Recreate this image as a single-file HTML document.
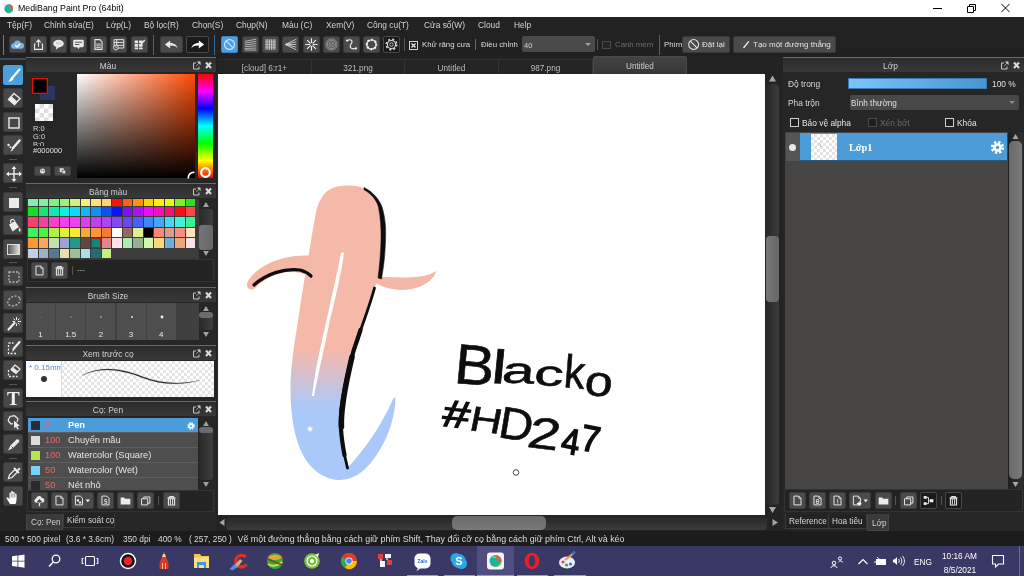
<!DOCTYPE html>
<html lang="vi"><head><meta charset="utf-8"><title>MediBang Paint Pro (64bit)</title>
<style>
*{box-sizing:border-box;margin:0;padding:0}
html,body{width:1024px;height:576px;overflow:hidden;background:#262626}
body{position:relative;font-family:"Liberation Sans","DejaVu Sans",sans-serif;font-size:8.4px;color:#d2d2d2;-webkit-font-smoothing:antialiased}
#root{position:absolute;left:0;top:0;width:1024px;height:576px;will-change:transform;filter:blur(.35px)}
.a{position:absolute}
.t{position:absolute;white-space:nowrap;line-height:1}
#title{left:0;top:0;width:1024px;height:17px;background:#fff;color:#000}
#menu{left:0;top:17px;width:1024px;height:16px;background:#222}
#menu .t{top:4px;font-size:8.4px;color:#d4d4d4}
#tool{left:0;top:33px;width:1024px;height:24px;background:linear-gradient(180deg,#222,#202020)}
.btn{position:absolute;background:#4a4a4a;border-radius:2px;border:1px solid #3a3a3a}
.btn.dk{background:#1a1a1a;border-color:#484848}
.btn.on{background:#4d9fdb;border-color:#3f88c0}
.btn svg{position:absolute;left:0;top:0;width:100%;height:100%}
.hdr{position:absolute;height:15px;background:linear-gradient(180deg,#2c2c2c,#393939);border-top:1px solid #3f73a0;color:#d0d0d0;font-size:8.4px}
.hdr .ttl{position:absolute;left:0;right:26px;top:4px;text-align:center;line-height:1;white-space:nowrap}
.hdr svg{position:absolute;right:3px;top:3px}
.pbody{position:absolute;background:#262626}
.tb{position:absolute;left:3px;width:20px;height:20px;background:#484848;border:1px solid #3a3a3a;border-radius:2px}
.tb.on{background:#4d9fdb;border-color:#4d9fdb}
.tb svg{position:absolute;left:0;top:0}
.sep{position:absolute;left:9px;width:8px;height:1px;background:#555}
.sw{position:absolute;width:9.5px;height:9.5px}
.row{position:absolute;left:28px;width:170px;height:15px;background:#4e4e4e;border-bottom:1px solid #5e5e5e;font-size:9.3px;color:#e4e4e4}
.row .c{position:absolute;left:3px;top:3px;width:9px;height:9px}
.row .n{position:absolute;left:17px;top:3px;color:#e26a6a;line-height:1}
.row .m{position:absolute;left:40px;top:3px;line-height:1;white-space:nowrap}
.sbv{position:absolute;background:linear-gradient(90deg,#1f1f1f,#303030)}
.thumb{position:absolute;background:linear-gradient(90deg,#6a6a6a,#7a7a7a);border-radius:4px}
.chk{background-color:#fff;background-image:linear-gradient(45deg,#ddd 25%,transparent 25%,transparent 75%,#ddd 75%),linear-gradient(45deg,#ddd 25%,transparent 25%,transparent 75%,#ddd 75%);background-size:8px 8px;background-position:0 0,4px 4px}
</style></head>
<body>
<div id="root">
<div id="title" class="a">
<svg class="a" style="left:3.500px;top:4px" width="9.500" height="9.500" viewBox="0 0 12 12"><circle cx="6" cy="6" r="5.600" fill="#22b0a0"/><path d="M6 .4a5.600 5.600 0 0 1 5.600 5.600c-2.500 1-5-1-5.600-5.600z" fill="#f05a38"/><path d="M11.600 6a5.600 5.600 0 0 1-7.500 5.200c4-1 5.500-2.700 7.500-5.200z" fill="#58c050"/></svg>
<span class="t" style="left:18px;top:4px;font-size:8.8px">MediBang Paint Pro (64bit)</span>
<svg class="a" style="left:925px;top:0" width="99" height="17" viewBox="0 0 99 17" fill="none" stroke="#000" stroke-width="1"><path d="M8 8.5h9"/><path d="M42.5 6.5h6v6h-6zM44.500 6.500v-2h6v6h-2"/><path d="M76.500 4l8 8M84.500 4l-8 8"/></svg>
</div>
<div id="menu" class="a"><span class="t" style="left:7px">Tệp(F)</span><span class="t" style="left:44px">Chỉnh sửa(E)</span><span class="t" style="left:106px">Lớp(L)</span><span class="t" style="left:144px">Bộ lọc(R)</span><span class="t" style="left:192px">Chọn(S)</span><span class="t" style="left:236px">Chụp(N)</span><span class="t" style="left:282px">Màu (C)</span><span class="t" style="left:326px">Xem(V)</span><span class="t" style="left:367px">Công cụ(T)</span><span class="t" style="left:424px">Cửa sổ(W)</span><span class="t" style="left:478px">Cloud</span><span class="t" style="left:514px">Help</span></div>
<div id="tool" class="a"><div class="a" style="left:3px;top:2px;width:1px;height:20px;background:#4a88b8"></div><div class="btn " style="left:9px;top:3px;width:17px;height:17px"><svg viewBox="0 0 17 17"><path d="M4.200 13.200a3 3 0 0 1 .2-6a4.100 4.100 0 0 1 7.800-.8a3.400 3.400 0 0 1 .5 6.800z" fill="#7db4ea"/><path d="M6 9.400l2 2 3.600-3.800" fill="none" stroke="#fff" stroke-width="1.500"/></svg></div><div class="btn " style="left:29.5px;top:3px;width:17px;height:17px"><svg viewBox="0 0 17 17"><path d="M5 8H4v6h9V8h-1M8.500 11V3.500M6 6l2.500-2.700L11 6" fill="none" stroke="#e8e8e8" stroke-width="1.300"/></svg></div><div class="btn " style="left:49.5px;top:3px;width:17px;height:17px"><svg viewBox="0 0 17 17"><ellipse cx="8.500" cy="7.500" rx="6" ry="4.300" fill="#e8e8e8"/><path d="M6 11l-.5 3.500 3.500-3z" fill="#e8e8e8"/><path d="M6 7h1M8 7h1M10 7h1" stroke="#888" stroke-width="1"/></svg></div><div class="btn " style="left:70px;top:3px;width:17px;height:17px"><svg viewBox="0 0 17 17"><rect x="2.500" y="3" width="12" height="8.500" rx="1.500" fill="#e8e8e8"/><path d="M7 11l1.500 3 1.500-3z" fill="#e8e8e8"/><path d="M4.500 6h8M4.500 8.500h5" stroke="#555" stroke-width="1.200"/></svg></div><div class="btn " style="left:90px;top:3px;width:17px;height:17px"><svg viewBox="0 0 17 17"><path d="M4.500 3h5.500l2.500 2.500V14h-8z" fill="none" stroke="#e8e8e8" stroke-width="1.200"/><path d="M6 8h5M6 10h5M6 12h5" stroke="#e8e8e8" stroke-width="1"/></svg></div><div class="btn " style="left:110px;top:3px;width:17px;height:17px"><svg viewBox="0 0 17 17"><path d="M3.500 3h11v9.500h-11zM3.500 6.200h11M3.500 9.400h11M6.500 3v9.500" fill="none" stroke="#e8e8e8" stroke-width="1.100"/><circle cx="5.500" cy="12" r="2.600" fill="#4a4a4a" stroke="#e8e8e8" stroke-width="1"/><path d="M5.500 10.500v1.600h1.300" stroke="#e8e8e8" fill="none" stroke-width=".8"/></svg></div><div class="btn " style="left:130.5px;top:3px;width:17px;height:17px"><svg viewBox="0 0 17 17"><path d="M3 4h4v3H3zM8 4h4v3H8zM3 8h4v3H3zM8 8h4v3H8zM3 12h4v2H3zM8 12h4v2H8z" fill="#e8e8e8"/><path d="M10 8.500l4.500-5" stroke="#e8e8e8" stroke-width="1.600"/></svg></div><div class="a" style="left:153px;top:2px;width:1px;height:20px;background:#3b6a90"></div><div class="btn " style="left:160px;top:3px;width:23px;height:17px"><svg viewBox="0 0 23 17"><path d="M4 8.500l6-4.500v2.800c4 0 7 1.500 8.500 6-2-2.600-4.500-3.300-8.500-3.200V13z" fill="#e8e8e8"/></svg></div><div class="btn dk" style="left:186px;top:3px;width:23px;height:17px"><svg viewBox="0 0 23 17"><path d="M19 8.500l-6-4.500v2.800c-4 0-7 1.500-8.500 6 2-2.600 4.500-3.300 8.500-3.200V13z" fill="#fff"/></svg></div><div class="a" style="left:214px;top:2px;width:1px;height:20px;background:#3b6a90"></div><div class="btn on" style="left:221px;top:3px;width:17px;height:17px"><svg viewBox="0 0 17 17"><circle cx="8.500" cy="8.500" r="5.600" fill="none" stroke="#cfe6fa" stroke-width="1.300"/><path d="M4.800 4.500l7.600 7.800" stroke="#cfe6fa" stroke-width="1.300"/></svg></div><div class="btn " style="left:241.5px;top:3px;width:17px;height:17px"><svg viewBox="0 0 17 17"><path d="M2 5l13-2.500M2 7l13-2M2 9l13-1.500M2 11l13-1M2 13l13-.5M2 14.800h13" stroke="#cfcfcf" stroke-width=".9" fill="none"/></svg></div><div class="btn " style="left:262px;top:3px;width:17px;height:17px"><svg viewBox="0 0 17 17"><path d="M3.500 2.500v12M5.500 2.500v12M7.500 2.500v12M9.500 2.500v12M11.500 2.500v12M13.500 2.500v12" stroke="#cfcfcf" stroke-width="1.100" fill="none"/><path d="M2.500 5.500h12M2.500 8.500h12M2.500 11.500h12" stroke="#cfcfcf" stroke-width=".6" fill="none"/></svg></div><div class="btn " style="left:282px;top:3px;width:17px;height:17px"><svg viewBox="0 0 17 17"><path d="M2.500 8.500L15 2.500M2.500 8.500L15 5.500M2.500 8.500H15M2.500 8.500L15 11.500M2.500 8.500L15 14.500" stroke="#cfcfcf" stroke-width="1" fill="none"/></svg></div><div class="btn " style="left:302.5px;top:3px;width:17px;height:17px"><svg viewBox="0 0 17 17"><path d="M8.500 1.500v14M1.500 8.500h14M3.500 3.500l10 10M13.500 3.500l-10 10" stroke="#f0f0f0" stroke-width="1.300" fill="none"/><circle cx="8.500" cy="8.500" r="1.600" fill="#4a4a4a"/></svg></div><div class="btn " style="left:322.5px;top:3px;width:17px;height:17px"><svg viewBox="0 0 17 17"><g fill="none" stroke="#b4b4b4" stroke-width=".8"><circle cx="8.500" cy="8.500" r="6.300"/><circle cx="8.500" cy="8.500" r="4.600"/><circle cx="8.500" cy="8.500" r="3"/><circle cx="8.500" cy="8.500" r="1.300"/></g></svg></div><div class="btn " style="left:343px;top:3px;width:17px;height:17px"><svg viewBox="0 0 17 17"><path d="M3.500 4c5-2.500 7 .5 4.500 4s0 6.500 5.500 5" fill="none" stroke="#eee" stroke-width="1.200"/><circle cx="3.500" cy="4" r="1.300" fill="#eee"/><circle cx="13.500" cy="13" r="1.300" fill="#eee"/></svg></div><div class="btn " style="left:363px;top:3px;width:17px;height:17px"><svg viewBox="0 0 17 17"><circle cx="8.500" cy="8.500" r="5.300" fill="none" stroke="#f4f4f4" stroke-width="1.500"/><circle cx="8.500" cy="8.500" r="5.300" fill="none" stroke="#f4f4f4" stroke-width="2.600" stroke-dasharray="1.600 2.560" stroke-dashoffset=".8"/></svg></div><div class="btn dk" style="left:383px;top:3px;width:17px;height:17px"><svg viewBox="0 0 17 17"><circle cx="8.500" cy="8.500" r="4.600" fill="none" stroke="#e0e0e0" stroke-width="1.200"/><circle cx="8.500" cy="8.500" r="6" fill="none" stroke="#e0e0e0" stroke-width="1.600" stroke-dasharray="2.360 2.360"/><circle cx="8.500" cy="8.500" r="2" fill="none" stroke="#e0e0e0" stroke-width=".9"/></svg></div><div class="a" style="left:404px;top:5px;width:1px;height:13px;background:#555"></div><svg class="a" style="left:409px;top:7.500px" width="9" height="9" viewBox="0 0 9 9"><rect x=".5" y=".5" width="8" height="8" fill="#1c1c1c" stroke="#d4d4d4"/><path d="M2.500 2.500l4 4M6.500 2.500l-4 4" stroke="#eee" stroke-width="1.300"/></svg><span class="t" style="left:422px;top:8px;font-size:7.8px;color:#ddd">Khử răng cưa</span><div class="a" style="left:475px;top:6px;width:1px;height:11px;background:#666"></div><span class="t" style="left:481px;top:8px;font-size:7.8px;color:#ddd">Điều chỉnh</span><div class="a" style="left:522px;top:3px;width:73px;height:16px;background:#4a4a4a;border-radius:2px"><span class="t" style="left:2px;top:5.500px;font-size:7.5px;color:#d4d4d4">40</span><svg class="a" style="right:4px;top:6.500px" width="6" height="3"><path d="M0 0h6L3 3z" fill="#a0a0a0"/></svg></div><div class="a" style="left:597px;top:6px;width:1px;height:11px;background:#555"></div><div class="a" style="left:602px;top:7.500px;width:8.500px;height:8.500px;border:1px solid #4a4a4a;background:#262626"></div><span class="t" style="left:615px;top:8px;font-size:7.8px;color:#6e6e6e">Canh mềm</span><div class="a" style="left:659px;top:2px;width:1px;height:20px;background:#3b6a90"></div><span class="t" style="left:664px;top:8px;font-size:7.8px;color:#ddd">Phím</span><div class="btn" style="left:682px;top:3px;width:48px;height:17px"><svg viewBox="0 0 48 17"><circle cx="10" cy="8.500" r="5.600" fill="none" stroke="#e8e8e8" stroke-width="1.200"/><path d="M6 4.500l8 8" stroke="#e8e8e8" stroke-width="1.200"/></svg><span class="t" style="left:19px;top:4px;font-size:8px;color:#e4e4e4">Đặt lại</span></div><div class="btn" style="left:733px;top:3px;width:103px;height:17px"><svg viewBox="0 0 103 17"><path d="M5 12.500l6-7.500" stroke="#f0f0f0" stroke-width="1.500"/></svg><span class="t" style="left:19px;top:4px;font-size:8px;color:#e4e4e4">Tạo một đường thẳng</span></div></div>
<div class="a" style="left:0;top:57px;width:26px;height:474px;background:#252525"></div><div class="a" style="left:0;top:58px;width:26px;height:2px;background:#3a4a58"></div><div class="tb on" style="top:65px"><svg width="20" height="20" viewBox="0 0 20 20"><path d="M15.500 3.500L9 11" stroke="#fff" stroke-width="2.200" stroke-linecap="round"/><path d="M4 15.500c2.500.3 4.800-.8 5.800-3.300l-2-1.600c-1.600 1-1.500 3.600-3.800 4.900z" fill="#fff"/></svg></div><div class="tb " style="top:88px"><svg width="20" height="20" viewBox="0 0 20 20"><path d="M10 4.500l6 5-5.500 6-6-5z" fill="none" stroke="#ececec" stroke-width="1.400"/><path d="M7 13l-2.500-2.500 3-3.200 5.500 5-2.500 3.200z" fill="#ececec"/></svg></div><div class="tb " style="top:112px"><svg width="20" height="20" viewBox="0 0 20 20"><rect x="5" y="5" width="10" height="10" fill="none" stroke="#ececec" stroke-width="1.400"/></svg></div><div class="tb " style="top:135px"><svg width="20" height="20" viewBox="0 0 20 20"><path d="M15.500 4.500L9 12" stroke="#ececec" stroke-width="2.400" stroke-linecap="round"/><path d="M8 12.500l-1.500 3 3-1.500z" fill="#ececec"/><circle cx="4.500" cy="9" r="1.200" fill="#ececec"/><circle cx="6.500" cy="11.300" r="1" fill="#ececec"/></svg></div><div class="sep" style="top:159px"></div><div class="tb " style="top:163px"><svg width="20" height="20" viewBox="0 0 20 20"><path d="M10 3v14M3 10h14" stroke="#ececec" stroke-width="1.400"/><path d="M10 2l2.500 3h-5zM10 18l2.500-3h-5zM2 10l3-2.500v5zM18 10l-3-2.500v5z" fill="#ececec"/></svg></div><div class="sep" style="top:187px"></div><div class="tb " style="top:192px"><svg width="20" height="20" viewBox="0 0 20 20"><rect x="5" y="5" width="10" height="10" fill="#ececec"/></svg></div><div class="tb " style="top:215px"><svg width="20" height="20" viewBox="0 0 20 20"><path d="M5 8.500l6-3.500 4 6-6.500 4.500z" fill="#ececec"/><path d="M7 7c-1.500-3.500 2.500-5 3.500-2" fill="none" stroke="#ececec" stroke-width="1.200"/><path d="M15.500 11.500c1 1.500 1.300 2.500 1 3.500-.8 1-2 .4-1.800-1z" fill="#ececec"/></svg></div><div class="tb" style="top:239px"><div class="a" style="left:3px;top:4px;width:13px;height:11px;border:1px solid #ddd;background:linear-gradient(90deg,#555,#ddd)"></div></div><div class="sep" style="top:262px"></div><div class="tb " style="top:266px"><svg width="20" height="20" viewBox="0 0 20 20"><rect x="5" y="5" width="10" height="10" fill="none" stroke="#b8b8b8" stroke-width="1.300" stroke-dasharray="2 1.500"/></svg></div><div class="tb " style="top:290px"><svg width="20" height="20" viewBox="0 0 20 20"><ellipse cx="10" cy="10" rx="6.500" ry="4.500" transform="rotate(-25 10 10)" fill="none" stroke="#b8b8b8" stroke-width="1.300" stroke-dasharray="2 1.500"/></svg></div><div class="tb " style="top:313px"><svg width="20" height="20" viewBox="0 0 20 20"><path d="M4.500 15.500l6-6.500" stroke="#ececec" stroke-width="2.200" stroke-linecap="round"/><path d="M12.500 3v3M12.500 9.500v2.500M8.500 7.500h2.500M14 7.500h3M9.500 4.500l1.800 1.800M15.500 4.500l-1.800 1.800M15.500 10.500l-1.800-1.800" stroke="#ececec" stroke-width="1"/></svg></div><div class="tb " style="top:337px"><svg width="20" height="20" viewBox="0 0 20 20"><path d="M4.500 7v8.500h9" fill="none" stroke="#ececec" stroke-width="1.300" stroke-dasharray="2 1.500"/><path d="M4.500 5h5" stroke="#ececec" stroke-width="1.300" stroke-dasharray="2 1.500"/><path d="M15.500 4l-6 7" stroke="#ececec" stroke-width="2.200" stroke-linecap="round"/><path d="M8.800 11.500l-1 2.200 2.200-1z" fill="#ececec"/></svg></div><div class="tb " style="top:360px"><svg width="20" height="20" viewBox="0 0 20 20"><path d="M4.500 9v6.500h9" fill="none" stroke="#ececec" stroke-width="1.300" stroke-dasharray="2 1.500"/><path d="M11 4l5 4-4 4.500-5-4z" fill="none" stroke="#ececec" stroke-width="1.200"/><path d="M9 11l-2-2 2.300-2.500 4.500 3.800-1.800 2.200z" fill="#ececec"/></svg></div><div class="sep" style="top:384px"></div><div class="tb" style="top:388px"><span class="t" style="left:3px;top:0px;font-family:'Liberation Serif',serif;font-weight:bold;font-size:19px;color:#f0f0f0">T</span></div><div class="tb " style="top:411px"><svg width="20" height="20" viewBox="0 0 20 20"><path d="M4 8.500l2-4 4.500-.8 3.500 3-1 3.500" fill="none" stroke="#ececec" stroke-width="1.200"/><path d="M4 8.500l3 3.500 2-.3" fill="none" stroke="#ececec" stroke-width="1.200"/><path d="M10 8.500v8l2-1.800 1.500 3 1.300-.6-1.400-3h2.600z" fill="#ececec"/></svg></div><div class="tb " style="top:434px"><svg width="20" height="20" viewBox="0 0 20 20"><path d="M4 15.500l2.500-5 6-6c1.500-1.200 3.700.8 2.500 2.500l-6 6z" fill="#ececec"/><path d="M7.500 11.500l2.200 2.200" stroke="#484848" stroke-width="1"/></svg></div><div class="sep" style="top:458px"></div><div class="tb " style="top:462px"><svg width="20" height="20" viewBox="0 0 20 20"><path d="M4.500 15.500l1-3.500 5.500-5.500 2.500 2.500-5.500 5.500z" fill="none" stroke="#ececec" stroke-width="1.300"/><path d="M10 5l5 5" stroke="#ececec" stroke-width="1.800"/><path d="M12.500 7.500l2-2.500c1-1 2.500.5 1.500 1.500l-2.500 2z" fill="#ececec"/></svg></div><div class="tb " style="top:486px"><svg width="20" height="20" viewBox="0 0 20 20"><path d="M6 17c-1-2-2.500-3.500-3.500-6 .8-1 2-.3 3 1.200V6.500c0-1.200 1.600-1.200 1.700 0V5c0-1.300 1.700-1.300 1.800 0v1c0-1.300 1.700-1.300 1.800 0v1.300c0-1.200 1.600-1.200 1.700 0 .2 4 .3 6.500-1 9.700z" fill="#fff"/><path d="M7.200 6.500v4M9 6v4.500M10.800 6.500v4" stroke="#484848" stroke-width=".6"/></svg></div><div class="hdr" style="left:26px;top:57px;width:190px"><span class="ttl">Màu</span><svg width="20" height="9" viewBox="0 0 20 9"><path d="M3 2H.5v6h5.500v-2.500" fill="none" stroke="#c4c4c4" stroke-width="1"/><path d="M4.500 .8h2.700v2.700zM3.300 4.800l3-3" fill="#c4c4c4" stroke="#c4c4c4" stroke-width=".7"/><path d="M13 1.500l5 5.500M18 1.500l-5 5.500" stroke="#dcdcdc" stroke-width="2"/></svg></div><div class="pbody" style="left:26px;top:73px;width:190px;height:110px"></div><div class="a" style="left:40px;top:86px;width:15px;height:14px;background:#2a3563"></div><div class="a" style="left:32px;top:78px;width:16px;height:16px;background:#000;border:1px solid #e01010;box-shadow:inset 0 0 0 .5px #a00"></div><div class="a chk" style="left:34.500px;top:104px;width:18px;height:17px;background-size:9px 9px;background-position:0 0,4.500px 4.500px"></div><span class="t" style="left:33px;top:125px;font-size:7.5px;color:#d8d8d8">R:0</span><span class="t" style="left:33px;top:133px;font-size:7.5px;color:#d8d8d8">G:0</span><span class="t" style="left:33px;top:140.5px;font-size:7.5px;color:#d8d8d8">B:0</span><div class="a" style="left:31px;top:146px;width:32px;height:9px;background:#262626"></div><span class="t" style="left:33px;top:147px;font-size:7.5px;color:#e2e2e2">#000000</span><div class="btn" style="left:34px;top:166px;width:17px;height:10px"><svg viewBox="0 0 17 10"><circle cx="8.500" cy="5" r="3.200" fill="#ddd"/><circle cx="7.500" cy="4" r=".8" fill="#555"/><circle cx="9.800" cy="4.500" r=".8" fill="#555"/></svg></div><div class="btn" style="left:54px;top:166px;width:17px;height:10px"><svg viewBox="0 0 17 10"><rect x="5" y="1.500" width="5" height="5" fill="#ddd"/><rect x="8" y="4" width="4.500" height="4.500" fill="#ddd" stroke="#555" stroke-width=".8"/></svg></div><div class="a" style="left:77px;top:74px;width:118px;height:104px;background:linear-gradient(0deg,#000,rgba(0,0,0,0)),linear-gradient(90deg,#fff,#ff4a05)"></div><svg class="a" style="left:187px;top:170px" width="9" height="9" viewBox="0 0 9 9"><path d="M1.500 8.500a5 5 0 0 1 6-6" fill="none" stroke="#fff" stroke-width="1.600"/></svg><div class="a" style="left:198px;top:74px;width:15px;height:104px;background:linear-gradient(180deg,#ff0000 0%,#ff00ff 16.600%,#0000ff 33.300%,#00ffff 50%,#00ff00 66.600%,#ffff00 83.300%,#ff0000 100%)"></div><svg class="a" style="left:199px;top:166px" width="13" height="13" viewBox="0 0 13 13"><circle cx="6.500" cy="6.500" r="4.300" fill="none" stroke="#fff" stroke-width="2.200"/></svg><div class="hdr" style="left:26px;top:183px;width:190px"><span class="ttl">Bảng màu</span><svg width="20" height="9" viewBox="0 0 20 9"><path d="M3 2H.5v6h5.500v-2.500" fill="none" stroke="#c4c4c4" stroke-width="1"/><path d="M4.500 .8h2.700v2.700zM3.300 4.800l3-3" fill="#c4c4c4" stroke="#c4c4c4" stroke-width=".7"/><path d="M13 1.500l5 5.500M18 1.500l-5 5.500" stroke="#dcdcdc" stroke-width="2"/></svg></div><div class="pbody" style="left:26px;top:199px;width:190px;height:88px"></div><div class="a" style="left:27px;top:199px;width:172px;height:60px;background:#3c3c3c;overflow:hidden"><i class="sw" style="left:1.0px;top:-3.0px;background:#80f0b0"></i><i class="sw" style="left:11.5px;top:-3.0px;background:#80f0a0"></i><i class="sw" style="left:22.0px;top:-3.0px;background:#80f080"></i><i class="sw" style="left:32.5px;top:-3.0px;background:#a0f080"></i><i class="sw" style="left:43.0px;top:-3.0px;background:#d0f080"></i><i class="sw" style="left:53.5px;top:-3.0px;background:#f0f080"></i><i class="sw" style="left:64.0px;top:-3.0px;background:#ffe080"></i><i class="sw" style="left:74.5px;top:-3.0px;background:#ffd080"></i><i class="sw" style="left:85.0px;top:-3.0px;background:#ff1010"></i><i class="sw" style="left:95.5px;top:-3.0px;background:#ff6010"></i><i class="sw" style="left:106.0px;top:-3.0px;background:#ff9010"></i><i class="sw" style="left:116.5px;top:-3.0px;background:#ffd010"></i><i class="sw" style="left:127.0px;top:-3.0px;background:#fff010"></i><i class="sw" style="left:137.5px;top:-3.0px;background:#e0ff10"></i><i class="sw" style="left:148.0px;top:-3.0px;background:#80f020"></i><i class="sw" style="left:158.5px;top:-3.0px;background:#30e020"></i><i class="sw" style="left:1.0px;top:7.5px;background:#10e020"></i><i class="sw" style="left:11.5px;top:7.5px;background:#10e870"></i><i class="sw" style="left:22.0px;top:7.5px;background:#10e8b8"></i><i class="sw" style="left:32.5px;top:7.5px;background:#10f0e0"></i><i class="sw" style="left:43.0px;top:7.5px;background:#10d8f8"></i><i class="sw" style="left:53.5px;top:7.5px;background:#10b8f8"></i><i class="sw" style="left:64.0px;top:7.5px;background:#1090f0"></i><i class="sw" style="left:74.5px;top:7.5px;background:#1050f0"></i><i class="sw" style="left:85.0px;top:7.5px;background:#1010f8"></i><i class="sw" style="left:95.5px;top:7.5px;background:#8010f0"></i><i class="sw" style="left:106.0px;top:7.5px;background:#b010f0"></i><i class="sw" style="left:116.5px;top:7.5px;background:#e810f0"></i><i class="sw" style="left:127.0px;top:7.5px;background:#f010c0"></i><i class="sw" style="left:137.5px;top:7.5px;background:#f81070"></i><i class="sw" style="left:148.0px;top:7.5px;background:#f81010"></i><i class="sw" style="left:158.5px;top:7.5px;background:#f84848"></i><i class="sw" style="left:1.0px;top:18.0px;background:#f84070"></i><i class="sw" style="left:11.5px;top:18.0px;background:#f840a0"></i><i class="sw" style="left:22.0px;top:18.0px;background:#f840c8"></i><i class="sw" style="left:32.5px;top:18.0px;background:#f040f0"></i><i class="sw" style="left:43.0px;top:18.0px;background:#f040f0"></i><i class="sw" style="left:53.5px;top:18.0px;background:#d840f0"></i><i class="sw" style="left:64.0px;top:18.0px;background:#c040f0"></i><i class="sw" style="left:74.5px;top:18.0px;background:#a848f0"></i><i class="sw" style="left:85.0px;top:18.0px;background:#8848f0"></i><i class="sw" style="left:95.5px;top:18.0px;background:#6848f0"></i><i class="sw" style="left:106.0px;top:18.0px;background:#4860f8"></i><i class="sw" style="left:116.5px;top:18.0px;background:#4088f8"></i><i class="sw" style="left:127.0px;top:18.0px;background:#40a8f8"></i><i class="sw" style="left:137.5px;top:18.0px;background:#40d8f8"></i><i class="sw" style="left:148.0px;top:18.0px;background:#40f0d8"></i><i class="sw" style="left:158.5px;top:18.0px;background:#40f090"></i><i class="sw" style="left:1.0px;top:28.5px;background:#40f060"></i><i class="sw" style="left:11.5px;top:28.5px;background:#50f040"></i><i class="sw" style="left:22.0px;top:28.5px;background:#b0f040"></i><i class="sw" style="left:32.5px;top:28.5px;background:#e0f040"></i><i class="sw" style="left:43.0px;top:28.5px;background:#f8e838"></i><i class="sw" style="left:53.5px;top:28.5px;background:#f8a838"></i><i class="sw" style="left:64.0px;top:28.5px;background:#f89838"></i><i class="sw" style="left:74.5px;top:28.5px;background:#f87838"></i><i class="sw" style="left:85.0px;top:28.5px;background:#ffffff"></i><i class="sw" style="left:95.5px;top:28.5px;background:#986860"></i><i class="sw" style="left:106.0px;top:28.5px;background:#e0f090"></i><i class="sw" style="left:116.5px;top:28.5px;background:#000000"></i><i class="sw" style="left:127.0px;top:28.5px;background:#f88878"></i><i class="sw" style="left:137.5px;top:28.5px;background:#e09888"></i><i class="sw" style="left:148.0px;top:28.5px;background:#f88c80"></i><i class="sw" style="left:158.5px;top:28.5px;background:#ffe0c0"></i><i class="sw" style="left:1.0px;top:39.0px;background:#f89838"></i><i class="sw" style="left:11.5px;top:39.0px;background:#f8a858"></i><i class="sw" style="left:22.0px;top:39.0px;background:#c0e0b0"></i><i class="sw" style="left:32.5px;top:39.0px;background:#a0a0d8"></i><i class="sw" style="left:43.0px;top:39.0px;background:#209888"></i><i class="sw" style="left:53.5px;top:39.0px;background:#604840"></i><i class="sw" style="left:64.0px;top:39.0px;background:#108878;box-shadow:inset 0 0 0 1px #a02020"></i><i class="sw" style="left:74.5px;top:39.0px;background:#e08888"></i><i class="sw" style="left:85.0px;top:39.0px;background:#ffe0e8"></i><i class="sw" style="left:95.5px;top:39.0px;background:#a8f0b0"></i><i class="sw" style="left:106.0px;top:39.0px;background:#98b090"></i><i class="sw" style="left:116.5px;top:39.0px;background:#d0f8b0"></i><i class="sw" style="left:127.0px;top:39.0px;background:#f8d878"></i><i class="sw" style="left:137.5px;top:39.0px;background:#70b0d8"></i><i class="sw" style="left:148.0px;top:39.0px;background:#e8a878"></i><i class="sw" style="left:158.5px;top:39.0px;background:#ffe0e8"></i><i class="sw" style="left:1.0px;top:49.5px;background:#c0d0e8"></i><i class="sw" style="left:11.5px;top:49.5px;background:#a0b0c8"></i><i class="sw" style="left:22.0px;top:49.5px;background:#587898"></i><i class="sw" style="left:32.5px;top:49.5px;background:#e8e0a8"></i><i class="sw" style="left:43.0px;top:49.5px;background:#a0c098"></i><i class="sw" style="left:53.5px;top:49.5px;background:#a8e0e0"></i><i class="sw" style="left:64.0px;top:49.5px;background:#286878"></i><i class="sw" style="left:74.5px;top:49.5px;background:#c8f080"></i></div><div class="a" style="left:199px;top:199px;width:15px;height:60px;background:#262626"></div><div class="a" style="left:199px;top:209px;width:14px;height:40px;border-radius:3px;background:linear-gradient(90deg,#2a2a2a,#3e3e3e)"></div><svg class="a" style="left:199px;top:199px" width="15" height="60"><path d="M4.0 8h6l-3-5z" fill="#a0a0a0"/><path d="M4.0 52h6l-3 5z" fill="#a0a0a0"/></svg><div class="a" style="left:199px;top:225px;width:14px;height:25px;border-radius:3px;background:linear-gradient(90deg,#747474,#686868)"></div><div class="a" style="left:27px;top:259px;width:187px;height:23px;border:1px solid #333;background:#232323"></div><div class="btn" style="left:31px;top:262px;width:17px;height:17px"><svg viewBox="0 0 17 17"><path d="M4.500 3.500h5.500l2.500 2.500v7.500h-8z" fill="none" stroke="#e8e8e8" stroke-width="1.100"/><path d="M10 3.500v2.500h2.500" fill="none" stroke="#e8e8e8" stroke-width=".9"/></svg></div><div class="btn" style="left:51px;top:262px;width:17px;height:17px"><svg viewBox="0 0 17 17"><path d="M4 5.500h9M6.500 5.500v-1.500h4v1.500" fill="none" stroke="#e8e8e8" stroke-width="1.200"/><path d="M5 6.500h7v7H5z" fill="none" stroke="#e8e8e8" stroke-width="1.200"/><path d="M7.200 7v6M9.800 7v6" stroke="#e8e8e8" stroke-width="1.100"/></svg></div><div class="a" style="left:72px;top:266px;width:1px;height:9px;background:#555"></div><span class="t" style="left:77px;top:266px;font-size:8px;color:#bbb">---</span><div class="hdr" style="left:26px;top:287px;width:190px"><span class="ttl">Brush Size</span><svg width="20" height="9" viewBox="0 0 20 9"><path d="M3 2H.5v6h5.500v-2.500" fill="none" stroke="#c4c4c4" stroke-width="1"/><path d="M4.500 .8h2.700v2.700zM3.300 4.800l3-3" fill="#c4c4c4" stroke="#c4c4c4" stroke-width=".7"/><path d="M13 1.500l5 5.500M18 1.500l-5 5.500" stroke="#dcdcdc" stroke-width="2"/></svg></div><div class="pbody" style="left:26px;top:303px;width:190px;height:42px"></div><div class="a" style="left:26px;top:303px;width:173px;height:37px;background:#404040"></div><div class="a" style="left:26.0px;top:303px;width:29px;height:37px;background:#4e4e4e"><svg class="a" style="left:0;top:0" width="29" height="37"><circle cx="15" cy="14" r="0.3" fill="#f4f4f4"/></svg><span class="t" style="left:0;width:29px;text-align:center;top:28px;font-size:8px;color:#e8e8e8">1</span></div><div class="a" style="left:56.2px;top:303px;width:29px;height:37px;background:#4e4e4e"><svg class="a" style="left:0;top:0" width="29" height="37"><circle cx="15" cy="14" r="0.5" fill="#f4f4f4"/></svg><span class="t" style="left:0;width:29px;text-align:center;top:28px;font-size:8px;color:#e8e8e8">1.5</span></div><div class="a" style="left:86.4px;top:303px;width:29px;height:37px;background:#4e4e4e"><svg class="a" style="left:0;top:0" width="29" height="37"><circle cx="15" cy="14" r="0.7" fill="#f4f4f4"/></svg><span class="t" style="left:0;width:29px;text-align:center;top:28px;font-size:8px;color:#e8e8e8">2</span></div><div class="a" style="left:116.6px;top:303px;width:29px;height:37px;background:#4e4e4e"><svg class="a" style="left:0;top:0" width="29" height="37"><circle cx="15" cy="14" r="0.9" fill="#f4f4f4"/></svg><span class="t" style="left:0;width:29px;text-align:center;top:28px;font-size:8px;color:#e8e8e8">3</span></div><div class="a" style="left:146.8px;top:303px;width:29px;height:37px;background:#4e4e4e"><svg class="a" style="left:0;top:0" width="29" height="37"><circle cx="15" cy="14" r="1.4" fill="#f4f4f4"/></svg><span class="t" style="left:0;width:29px;text-align:center;top:28px;font-size:8px;color:#e8e8e8">4</span></div><div class="a" style="left:199px;top:303px;width:15px;height:37px;background:#262626"></div><div class="a" style="left:199px;top:313px;width:14px;height:17px;border-radius:3px;background:linear-gradient(90deg,#2a2a2a,#3e3e3e)"></div><svg class="a" style="left:199px;top:303px" width="15" height="37"><path d="M4.0 8h6l-3-5z" fill="#a0a0a0"/><path d="M4.0 29h6l-3 5z" fill="#a0a0a0"/></svg><div class="a" style="left:199px;top:312px;width:14px;height:6px;border-radius:3px;background:#6c6c6c"></div><div class="hdr" style="left:26px;top:345px;width:190px"><span class="ttl">Xem trước cọ</span><svg width="20" height="9" viewBox="0 0 20 9"><path d="M3 2H.5v6h5.500v-2.500" fill="none" stroke="#c4c4c4" stroke-width="1"/><path d="M4.500 .8h2.700v2.700zM3.300 4.800l3-3" fill="#c4c4c4" stroke="#c4c4c4" stroke-width=".7"/><path d="M13 1.500l5 5.500M18 1.500l-5 5.500" stroke="#dcdcdc" stroke-width="2"/></svg></div><div class="pbody" style="left:26px;top:361px;width:190px;height:41px"></div><div class="a chk" style="left:61px;top:361px;width:153px;height:36px;background-size:6px 6px;background-position:0 0,3px 3px;background-image:linear-gradient(45deg,#e6e6e6 25%,transparent 25%,transparent 75%,#e6e6e6 75%),linear-gradient(45deg,#e6e6e6 25%,transparent 25%,transparent 75%,#e6e6e6 75%)"></div><div class="a" style="left:26px;top:361px;width:35.500px;height:36px;background:#fff;border-right:1px solid #ddd;overflow:hidden"><span class="t" style="left:3px;top:3px;font-size:8px;color:#4d8fd0">* 0.15mm</span><div class="a" style="left:15px;top:15px;width:6px;height:6px;border-radius:50%;background:#333"></div></div><svg class="a" style="left:61px;top:361px" width="153" height="36" viewBox="0 0 153 36"><path d="M21 14.500C40 4.500 60 7.200 82 15.700C100 22.200 118 24 139 19.300C118 25 100 23.500 82 16.900C60 8.300 40 5.500 21 14.500z" fill="#2a2a2a" stroke="#2a2a2a" stroke-width=".2"/></svg><div class="hdr" style="left:26px;top:401px;width:190px"><span class="ttl">Cọ: Pen</span><svg width="20" height="9" viewBox="0 0 20 9"><path d="M3 2H.5v6h5.500v-2.500" fill="none" stroke="#c4c4c4" stroke-width="1"/><path d="M4.500 .8h2.700v2.700zM3.300 4.800l3-3" fill="#c4c4c4" stroke="#c4c4c4" stroke-width=".7"/><path d="M13 1.500l5 5.500M18 1.500l-5 5.500" stroke="#dcdcdc" stroke-width="2"/></svg></div><div class="pbody" style="left:26px;top:417px;width:190px;height:97px"></div><div class="a" style="left:28px;top:418px;width:170px;height:72px;background:#484848;overflow:hidden"></div><div class="a" style="left:0;top:418px;width:216px;height:72px;overflow:hidden"><div class="row" style="top:0px;background:#4b9cd8;font-weight:bold;color:#fff;"><i class="c" style="background:#2c2c38"></i><span class="n">2</span><span class="m">Pen</span><svg class="a" style="right:2px;top:2.500px" width="10" height="10" viewBox="0 0 10 10"><circle cx="5" cy="5" r="2.600" fill="none" stroke="#fff" stroke-width="2.200" stroke-dasharray="1.360 .68"/><circle cx="5" cy="5" r="2.200" fill="#fff"/><circle cx="5" cy="5" r="1" fill="#4b9cd8"/></svg></div><div class="row" style="top:15px;"><i class="c" style="background:#dcdcdc"></i><span class="n">100</span><span class="m">Chuyển mầu</span></div><div class="row" style="top:30px;"><i class="c" style="background:#b4e650"></i><span class="n">100</span><span class="m">Watercolor (Square)</span></div><div class="row" style="top:45px;"><i class="c" style="background:#78d2fa"></i><span class="n">50</span><span class="m">Watercolor (Wet)</span></div><div class="row" style="top:60px;"><i class="c" style="background:#2a2a2a"></i><span class="n">50</span><span class="m">Nét nhỏ</span></div></div><div class="a" style="left:199px;top:418px;width:15px;height:72px;background:#262626"></div><div class="a" style="left:199px;top:428px;width:14px;height:52px;border-radius:3px;background:linear-gradient(90deg,#2a2a2a,#3e3e3e)"></div><svg class="a" style="left:199px;top:418px" width="15" height="72"><path d="M4.0 8h6l-3-5z" fill="#a0a0a0"/><path d="M4.0 64h6l-3 5z" fill="#a0a0a0"/></svg><div class="a" style="left:199px;top:427px;width:14px;height:6px;border-radius:3px;background:#6c6c6c"></div><div class="a" style="left:27px;top:490px;width:187px;height:22px;border:1px solid #333;background:#232323"></div><div class="btn " style="left:31px;top:492px;width:17px;height:17px"><svg viewBox="0 0 17 17"><path d="M4.500 11a2.400 2.400 0 0 1 .2-4.700a3.400 3.400 0 0 1 6.600-.6a2.700 2.700 0 0 1 .7 5.300z" fill="#ececec"/><path d="M8.500 14.500v-6M6 10.500l2.500-2.700 2.500 2.700" fill="none" stroke="#4a4a4a" stroke-width="1.500"/><path d="M8.500 15v-4" stroke="#ececec" stroke-width="1.500"/></svg></div><div class="btn " style="left:51px;top:492px;width:17px;height:17px"><svg viewBox="0 0 17 17"><path d="M4.500 3.500h5.500l2.500 2.500v7.500h-8z" fill="none" stroke="#e8e8e8" stroke-width="1.100"/><path d="M10 3.500v2.500h2.500" fill="none" stroke="#e8e8e8" stroke-width=".9"/></svg></div><div class="btn " style="left:71px;top:492px;width:23px;height:17px"><svg viewBox="0 0 23 17"><path d="M3.500 3.500h5.500l2.500 2.500v7.500h-8z" fill="none" stroke="#e8e8e8" stroke-width="1.100"/><path d="M5 7h2.500v2.500H5zM7.500 9.500H10V12H7.500z" fill="#e8e8e8"/><path d="M15 7.500h5l-2.500 3z" fill="#f0f0f0"/></svg></div><div class="btn " style="left:97px;top:492px;width:17px;height:17px"><svg viewBox="0 0 17 17"><path d="M4.500 3.500h5.500l2.500 2.500v7.500h-8z" fill="none" stroke="#e8e8e8" stroke-width="1.100"/><path d="M10.200 7.500h-2.600v2h2.400v2.200h-2.800" fill="none" stroke="#e8e8e8" stroke-width="1"/></svg></div><div class="btn " style="left:117px;top:492px;width:17px;height:17px"><svg viewBox="0 0 17 17"><path d="M3 5h4l1 1.500h6V13H3z" fill="#ececec"/></svg></div><div class="btn " style="left:137px;top:492px;width:17px;height:17px"><svg viewBox="0 0 17 17"><path d="M6.500 4.500h7v7h-7z" fill="none" stroke="#e8e8e8" stroke-width="1.100"/><path d="M4 6.500h7v7H4z" fill="#4a4a4a" stroke="#e8e8e8" stroke-width="1.100"/></svg></div><div class="a" style="left:158px;top:496px;width:1px;height:9px;background:#555"></div><div class="btn " style="left:162.5px;top:492px;width:17px;height:17px"><svg viewBox="0 0 17 17"><path d="M4 5.500h9M6.500 5.500v-1.500h4v1.500" fill="none" stroke="#e8e8e8" stroke-width="1.200"/><path d="M5 6.500h7v7H5z" fill="none" stroke="#e8e8e8" stroke-width="1.200"/><path d="M7.200 7v6M9.800 7v6" stroke="#e8e8e8" stroke-width="1.100"/></svg></div><div class="a" style="left:26px;top:514px;width:37px;height:16px;background:#3a3a3a;border:1px solid #444;border-top:none"><span class="t" style="left:4px;top:5px;font-size:8.2px;color:#cfcfcf">Cọ: Pen</span></div><div class="a" style="left:63px;top:514px;width:52px;height:14px;background:#232323;border:1px solid #3a3a3a;border-top:none"><span class="t" style="left:3px;top:3px;font-size:8.2px;color:#d8d8d8">Kiểm soát cọ</span></div><div class="a" style="left:216px;top:57px;width:567px;height:17px;background:#222"></div><div class="a" style="left:218px;top:59px;width:94px;height:15px;background:#242424;border-right:1px solid #333;border-top:1px solid #2e2e2e"><span class="t" style="left:0;width:100%;text-align:center;top:4.500px;font-size:8.2px;color:#bdbdbd">[cloud] 6:r1+</span></div><div class="a" style="left:312px;top:59px;width:93px;height:15px;background:#242424;border-right:1px solid #333;border-top:1px solid #2e2e2e"><span class="t" style="left:0;width:100%;text-align:center;top:4.500px;font-size:8.2px;color:#bdbdbd">321.png</span></div><div class="a" style="left:405px;top:59px;width:94px;height:15px;background:#242424;border-right:1px solid #333;border-top:1px solid #2e2e2e"><span class="t" style="left:0;width:100%;text-align:center;top:4.500px;font-size:8.2px;color:#bdbdbd">Untitled</span></div><div class="a" style="left:499px;top:59px;width:94px;height:15px;background:#242424;border-right:1px solid #333;border-top:1px solid #2e2e2e"><span class="t" style="left:0;width:100%;text-align:center;top:4.500px;font-size:8.2px;color:#bdbdbd">987.png</span></div><div class="a" style="left:593px;top:56px;width:94px;height:18px;background:linear-gradient(180deg,#444,#363636);border:1px solid #4a4a4a;border-bottom:none;border-radius:2px 2px 0 0"><span class="t" style="left:0;width:100%;text-align:center;top:6px;font-size:8.2px;color:#cfcfcf">Untitled</span></div><div class="a" style="left:218px;top:74px;width:548px;height:441px;background:#fff;overflow:hidden"><svg class="a" style="left:0;top:0" width="548" height="441" viewBox="218 74 548 441">
<defs>
<linearGradient id="bg" x1="0" y1="350" x2="0" y2="408" gradientUnits="userSpaceOnUse"><stop offset="0" stop-color="#f5b9a9"/><stop offset="1" stop-color="#abc8fb"/></linearGradient>
<filter id="bl" x="-5%" y="-5%" width="110%" height="110%"><feGaussianBlur stdDeviation="0.7"/></filter>
</defs>
<g filter="url(#bl)">
<!-- arms -->
<path d="M247.500 282C256 266 284 253 314 256L311 277C292 266 268 274 254 289C249 291 245.500 287 247.500 282Z" fill="#f5b8a7"/>
<path d="M378 276.500C392 277.500 408 278 420 276.500C428 275.500 433 273 436 271C434 281 420 289.500 402 290C392 290 382 287 376 283Z" fill="#f5b8a7"/>
<!-- body -->
<path d="M321.700 198C325 190 335 185.500 347 185.500C356 185.500 362 187 365 189C373 194 378 200 380 207C383 218 383.500 230 383 240C383 255 382 268 380 278L374 288C368 310 358 335 353 351C347 372 338 410 340 429C341 445 344 458 347 468C358 457 369 442 376 431C382 421 389 409 393 399L395.500 397C395.500 402 395 407 394 412C391 430 383 447 373 460C365 471 353 480 340 480C325 480 311 470 303 455C294 438 290 412 290.500 384C291 365 294 345 297.500 324C301 300 306 270 309 253C311 240 313 228 315 218C316 210 318 203 321.700 198Z" fill="url(#bg)"/>
<!-- highlights -->
<path d="M341 252.500L344.200 252.500C341 275 335 300 329.500 322C324 350 318 375 314 396L312 396C315 370 321 345 326.500 320C332 295 338 270 341 252.500Z" fill="#fff"/>
<circle cx="310" cy="429" r="2.800" fill="#fff" opacity=".45"/><circle cx="310" cy="429" r="1.700" fill="#fff"/>
<!-- black lines -->
<path d="M364 187.500C373 192 379 199 382 207C385.500 218 386 230 385.500 240C385 256 383.500 268 381.500 279L378 278C379.500 266 380.700 254 381 240C381.300 229 380.500 217 378.500 207C376.500 200 371 193.500 364 189.800Z" fill="#0a0a0a" stroke="#0a0a0a" stroke-width=".5" stroke-linejoin="round"/>
<path d="M374.500 288C368.500 310 358.500 335 353.500 351C348 372 339 410 341 429C342 445 345 458 347.500 468" fill="none" stroke="#0a0a0a" stroke-width="2.800" stroke-linecap="round"/>
<path d="M360.500 330C358 338 355.500 345 353.500 351C348 372 339 410 341 429C341.500 438 343 447 344.500 455" fill="none" stroke="#0a0a0a" stroke-width="4.200" stroke-linecap="round"/>
<path d="M352 357C347 378 340.500 408 341.500 427" fill="none" stroke="#0a0a0a" stroke-width="5.400" stroke-linecap="round"/>
<path d="M254 285C266 274 284 268 300 270C304 271 308 273 311 276" fill="none" stroke="#0a0a0a" stroke-width="3.200" stroke-linecap="round"/>
<!-- handwritten signature -->
<g fill="#0a0a0a" stroke="#0a0a0a" stroke-width=".6" font-family="'Liberation Sans',sans-serif">
<text><tspan x="453.0" y="382.8" font-size="56.4" textLength="40.1" lengthAdjust="spacingAndGlyphs" rotate="5">B</tspan><tspan x="490.3" y="383.0" font-size="47.2" textLength="14.8" lengthAdjust="spacingAndGlyphs" rotate="4">l</tspan><tspan x="501.3" y="382.6" font-size="36.4" textLength="32.5" lengthAdjust="spacingAndGlyphs" rotate="3">a</tspan><tspan x="533.2" y="385.1" font-size="35.5" textLength="29.1" lengthAdjust="spacingAndGlyphs" rotate="4">c</tspan><tspan x="563.1" y="387.0" font-size="46.4" textLength="20.9" lengthAdjust="spacingAndGlyphs" rotate="5">k</tspan><tspan x="583.5" y="394.6" font-size="42.5" textLength="27.8" lengthAdjust="spacingAndGlyphs" rotate="6">o</tspan></text>
<text><tspan x="441.0" y="425.8" font-size="38.3" textLength="26.8" lengthAdjust="spacingAndGlyphs" rotate="8" stroke-width="1.3">#</tspan><tspan x="468.0" y="430.0" font-size="34.8" textLength="32.2" lengthAdjust="spacingAndGlyphs" rotate="9">H</tspan><tspan x="497.0" y="437.0" font-size="44.9" textLength="34.0" lengthAdjust="spacingAndGlyphs" rotate="9">D</tspan><tspan x="525.7" y="446.7" font-size="43.9" textLength="31.9" lengthAdjust="spacingAndGlyphs" rotate="9">2</tspan><tspan x="559.9" y="452.0" font-size="36.2" textLength="18.0" lengthAdjust="spacingAndGlyphs" rotate="10" stroke-width="1.5">4</tspan><tspan x="579.3" y="449.4" font-size="36.8" textLength="19.0" lengthAdjust="spacingAndGlyphs" rotate="10" stroke-width="1.5">7</tspan></text>
</g>
</g>
<circle cx="516" cy="472.500" r="2.800" fill="#fff" stroke="#333" stroke-width=".9"/>
</svg></div><div class="a" style="left:765px;top:74px;width:18px;height:441px;background:#232323"></div><div class="a" style="left:765.500px;top:84px;width:13.500px;height:421px;border-radius:4px;background:linear-gradient(90deg,#272727,#3c3c3c)"></div><svg class="a" style="left:766px;top:74px" width="14" height="441"><path d="M3 7.500h7l-3.500-6z" fill="#a8a8a8"/><path d="M3 433h7l-3.500 6z" fill="#a8a8a8"/></svg><div class="a" style="left:766px;top:235.500px;width:13px;height:66px;border-radius:4px;background:linear-gradient(90deg,#787878,#666)"></div><div class="a" style="left:216px;top:515px;width:567px;height:16px;background:#232323"></div><div class="a" style="left:226px;top:515.500px;width:541px;height:14.500px;border-radius:4px;background:linear-gradient(180deg,#252525,#3c3c3c)"></div><svg class="a" style="left:216px;top:515px" width="567" height="16"><path d="M8.500 4v7l-5-3.500z" fill="#a4a4a4"/><path d="M556.500 4v7l5.500-3.500z" fill="#a4a4a4"/></svg><div class="a" style="left:452px;top:516px;width:94px;height:13.500px;border-radius:5px;background:linear-gradient(180deg,#6a6a6a,#7a7a7a)"></div><div class="hdr" style="left:783px;top:57px;width:241px"><span class="ttl">Lớp</span><svg width="20" height="9" viewBox="0 0 20 9"><path d="M3 2H.5v6h5.500v-2.500" fill="none" stroke="#c4c4c4" stroke-width="1"/><path d="M4.500 .8h2.700v2.700zM3.300 4.800l3-3" fill="#c4c4c4" stroke="#c4c4c4" stroke-width=".7"/><path d="M13 1.500l5 5.500M18 1.500l-5 5.500" stroke="#dcdcdc" stroke-width="2"/></svg></div><div class="pbody" style="left:783px;top:73px;width:241px;height:458px"></div><span class="t" style="left:788px;top:80px;font-size:8.4px;color:#d6d6d6">Độ trong</span><div class="a" style="left:848px;top:78px;width:139px;height:11px;background:linear-gradient(90deg,#7cc4fa,#4a94d4);border:1px solid #3a78b0"></div><span class="t" style="left:992px;top:80px;font-size:8.4px;color:#e0e0e0">100 %</span><span class="t" style="left:788px;top:99px;font-size:8.4px;color:#d6d6d6">Pha trộn</span><div class="a" style="left:850px;top:94.500px;width:169px;height:15.500px;background:#484848;border-radius:2px"><span class="t" style="left:1px;top:5px;font-size:8.2px;color:#e0e0e0">Bình thường</span><svg class="a" style="right:4px;top:6px" width="6" height="3"><path d="M0 0h6L3 3z" fill="#8a8a8a"/></svg></div><div class="a" style="left:790px;top:118px;width:9px;height:9px;border:1px solid #d0d0d0;background:#1e1e1e"></div><span class="t" style="left:802px;top:118.500px;font-size:8.4px;color:#e4e4e4">Bảo vệ alpha</span><div class="a" style="left:868px;top:118px;width:9px;height:9px;border:1px solid #4a4a4a;background:#1e1e1e"></div><span class="t" style="left:880px;top:118.500px;font-size:8.4px;color:#6a6a6a">Xén bớt</span><div class="a" style="left:945px;top:118px;width:9px;height:9px;border:1px solid #d0d0d0;background:#1e1e1e"></div><span class="t" style="left:957px;top:118.500px;font-size:8.4px;color:#e4e4e4">Khóa</span><div class="a" style="left:785px;top:132px;width:223px;height:357px;background:#474543"></div><div class="a" style="left:786px;top:133px;width:14px;height:28px;background:#555"><div class="a" style="left:3px;top:11px;width:7px;height:7px;border-radius:50%;background:#e8e8e8"></div></div><div class="a" style="left:800px;top:133px;width:207px;height:28px;background:#4b9cd8;border-bottom:1px solid #2a5a84"><div class="a chk" style="left:11px;top:1px;width:26px;height:26px;background-size:6px 6px;background-position:0 0,3px 3px;background-image:linear-gradient(45deg,#e4e4e4 25%,transparent 25%,transparent 75%,#e4e4e4 75%),linear-gradient(45deg,#e4e4e4 25%,transparent 25%,transparent 75%,#e4e4e4 75%)"><svg class="a" style="left:0;top:0" width="26" height="26"><path d="M7.500 9.500q1.500 -1 2 1.500" fill="none" stroke="#e0b0a4" stroke-width="1"/><path d="M9.500 11.500l1 1.500" stroke="#999" stroke-width=".9"/></svg></div><span class="t" style="left:49px;top:10px;font-size:10.300px;font-weight:bold;color:#fff;font-family:'Liberation Serif','DejaVu Serif',serif">Lớp1</span><svg class="a" style="left:190px;top:7px" width="15" height="15" viewBox="0 0 15 15"><circle cx="7.500" cy="7.500" r="5" fill="none" stroke="#fff" stroke-width="3.200" stroke-dasharray="2.200 1.727"/><circle cx="7.500" cy="7.500" r="4.200" fill="#fff"/><circle cx="7.500" cy="7.500" r="1.700" fill="#4b9cd8"/></svg></div><div class="sbv" style="left:1008px;top:132px;width:15px;height:357px"></div><svg class="a" style="left:1008px;top:132px" width="15" height="357"><path d="M4.500 7h6l-3-5z" fill="#a8a8a8"/><path d="M4.500 350h6l-3 5z" fill="#a8a8a8"/></svg><div class="thumb" style="left:1009px;top:141px;width:13px;height:338px;border-radius:5px"></div><div class="a" style="left:784px;top:489px;width:239px;height:23px;border:1px solid #333;background:#232323"></div><div class="btn " style="left:788.5px;top:492px;width:17px;height:17px"><svg viewBox="0 0 17 17"><path d="M4.500 3.500h5.500l2.500 2.500v7.500h-8z" fill="none" stroke="#e8e8e8" stroke-width="1.100"/><path d="M10 3.500v2.500h2.500" fill="none" stroke="#e8e8e8" stroke-width=".9"/></svg></div><div class="btn " style="left:808.5px;top:492px;width:17px;height:17px"><svg viewBox="0 0 17 17"><path d="M4.500 3.500h5.500l2.500 2.500v7.500h-8z" fill="none" stroke="#e8e8e8" stroke-width="1.100"/><path d="M10 3.500v2.500h2.500" fill="none" stroke="#e8e8e8" stroke-width=".9"/><path d="M7.200 7.500h2.600v4.500H7.200zM7.200 9.700h2.600" fill="none" stroke="#e8e8e8" stroke-width=".9"/></svg></div><div class="btn " style="left:828.5px;top:492px;width:17px;height:17px"><svg viewBox="0 0 17 17"><path d="M4.500 3.500h5.500l2.500 2.500v7.500h-8z" fill="none" stroke="#e8e8e8" stroke-width="1.100"/><path d="M10 3.500v2.500h2.500" fill="none" stroke="#e8e8e8" stroke-width=".9"/><path d="M7.800 8.200l1-.7v4.500" fill="none" stroke="#e8e8e8" stroke-width=".9"/></svg></div><div class="btn " style="left:849px;top:492px;width:22px;height:17px"><svg viewBox="0 0 22 17"><path d="M3.500 3.500h5.500l2.500 2.500v7.500h-8z" fill="none" stroke="#e8e8e8" stroke-width="1.100"/><path d="M9 3.500v2.500h2.500" fill="none" stroke="#e8e8e8" stroke-width=".9"/><path d="M7.500 12h5M10 9.500v5" stroke="#fff" stroke-width="1.400"/><path d="M15 7.500h5l-2.500 3z" fill="#f0f0f0"/></svg></div><div class="btn " style="left:874.5px;top:492px;width:17px;height:17px"><svg viewBox="0 0 17 17"><path d="M3 5h4l1 1.500h6V13H3z" fill="#ececec"/></svg></div><div class="a" style="left:895px;top:496px;width:1px;height:9px;background:#555"></div><div class="btn " style="left:899.5px;top:492px;width:17px;height:17px"><svg viewBox="0 0 17 17"><path d="M6.500 4.500h7v7h-7z" fill="none" stroke="#e8e8e8" stroke-width="1.100"/><path d="M4 6.500h7v7H4z" fill="#4a4a4a" stroke="#e8e8e8" stroke-width="1.100"/></svg></div><div class="btn dk" style="left:920px;top:492px;width:17px;height:17px"><svg viewBox="0 0 17 17"><rect x="3" y="3.500" width="3.500" height="3" fill="#eee"/><rect x="3" y="10.500" width="3.500" height="3" fill="#eee"/><rect x="10" y="7" width="4" height="3.500" fill="#eee"/><path d="M6.500 5h2v7h-2M8.500 8.700H10" fill="none" stroke="#eee" stroke-width="1"/></svg></div><div class="a" style="left:941px;top:496px;width:1px;height:9px;background:#555"></div><div class="btn dk" style="left:945px;top:492px;width:17px;height:17px"><svg viewBox="0 0 17 17"><path d="M4 5.500h9M6.500 5.500v-1.500h4v1.500" fill="none" stroke="#e8e8e8" stroke-width="1.200"/><path d="M5 6.500h7v7H5z" fill="none" stroke="#e8e8e8" stroke-width="1.200"/><path d="M7.200 7v6M9.800 7v6" stroke="#e8e8e8" stroke-width="1.100"/></svg></div><div class="a" style="left:785px;top:514px;width:44px;height:15px;background:#232323;border:1px solid #3a3a3a;border-top:none"><span class="t" style="left:3px;top:4px;font-size:8.2px;color:#d8d8d8">Reference</span></div><div class="a" style="left:829px;top:514px;width:38px;height:15px;background:#232323;border:1px solid #3a3a3a;border-top:none;border-left:none"><span class="t" style="left:3px;top:4px;font-size:8.2px;color:#d8d8d8">Hoa tiêu</span></div><div class="a" style="left:867px;top:514px;width:22px;height:17px;background:#3a3a3a;border:1px solid #444;border-top:none"><span class="t" style="left:4px;top:6px;font-size:8.2px;color:#cfcfcf">Lớp</span></div><div class="a" style="left:0;top:531px;width:1024px;height:15px;background:#1c1c1c"></div><span class="t" style="left:5px;top:535px;font-size:8.4px;color:#dcdcdc">500 * 500 pixel</span><span class="t" style="left:66px;top:535px;font-size:8.4px;color:#dcdcdc">(3.6 * 3.6cm)</span><span class="t" style="left:123px;top:535px;font-size:8.4px;color:#dcdcdc">350 dpi</span><span class="t" style="left:158px;top:535px;font-size:8.4px;color:#dcdcdc">400 %</span><span class="t" style="left:189px;top:535px;font-size:8.4px;color:#dcdcdc">( 257, 250 )</span><span class="t" style="left:237.5px;top:534.5px;font-size:8.9px;color:#dcdcdc">Vẽ một đường thẳng bằng cách giữ phím Shift, Thay đổi cỡ cọ bằng cách giữ phím Ctrl, Alt và kéo</span><div class="a" style="left:0;top:546px;width:1024px;height:30px;background:#3a3864"></div><div class="a" style="left:477px;top:546px;width:37px;height:30px;background:#504e80"></div><div class="a" style="left:407px;top:574.500px;width:31px;height:1.500px;background:#8f9fd8"></div><div class="a" style="left:444px;top:574.500px;width:31px;height:1.500px;background:#8f9fd8"></div><div class="a" style="left:477px;top:574.500px;width:37px;height:1.500px;background:#8f9fd8"></div><div class="a" style="left:517px;top:574.500px;width:31px;height:1.500px;background:#8f9fd8"></div><div class="a" style="left:554px;top:574.500px;width:32px;height:1.500px;background:#8f9fd8"></div><svg class="a" style="left:0;top:546px" width="1024" height="30" viewBox="0 546 1024 30">
<path d="M1019.500 546v30" stroke="#6e6c94" stroke-width="1"/>
<!-- start -->
<path d="M12 556.300l5.500-.8v5.200H12zM18.300 555.400l6.200-.9v6.200h-6.200zM12 561.500h5.500v5.200l-5.500-.8zM18.300 561.500h6.200v6.200l-6.200-.9z" fill="#fff"/>
<!-- search -->
<circle cx="56" cy="559" r="3.800" fill="none" stroke="#fff" stroke-width="1.300"/><path d="M53.300 562l-4.300 4.500" stroke="#fff" stroke-width="1.400"/>
<!-- task view -->
<rect x="85.500" y="556.500" width="9" height="9" rx="1" fill="none" stroke="#fff" stroke-width="1.100"/><path d="M83.500 558.500h-1.300v5h1.300M96.500 558.500h1.300v5h-1.300" fill="none" stroke="#fff" stroke-width="1.100"/>
<!-- record -->
<circle cx="128" cy="561" r="7.500" fill="#111" stroke="#fff" stroke-width="1.500"/><circle cx="128" cy="561" r="4.300" fill="#f0202c"/>
<!-- pencil -->
<path d="M164 552l4.500 11v6h-9v-6z" fill="#d83a2a"/><path d="M164 552l2 5h-4z" fill="#f2d7a8"/><path d="M164 552l.8 2h-1.600z" fill="#333"/><path d="M162.500 563v6M165.500 563v6" stroke="#f4b8a8" stroke-width="1"/>
<!-- folder -->
<path d="M194 554h6l1.500 2H209v12h-15z" fill="#f6c84a"/><path d="M194 557.500h15V568h-15z" fill="#fbe08a"/><path d="M197 562h9v6h-9z" fill="#3a9ae0"/><path d="M199 565h5v3h-5z" fill="#fbe08a"/>
<!-- ccleaner -->
<path d="M247 556a7.500 7.500 0 1 0 1 9l-3-1.500a4.200 4.200 0 1 1-.5-5.500z" fill="#e0302a"/><path d="M234 566l6-7 2.500 2-6 7z" fill="#d8b070"/><path d="M229.500 569l5-5 3 3-5 3.500z" fill="#5a8ad8"/>
<!-- green ball -->
<circle cx="275" cy="561" r="8" fill="#3aa83a"/><path d="M268 557c4-3 10-3 14 0-2 3-10 5-14 0z" fill="#f0a030"/><path d="M268 564c4 3 10 2 14-2" fill="none" stroke="#c8e060" stroke-width="2"/><path d="M267.500 559l15 6" stroke="#7a4a20" stroke-width="1.500"/>
<!-- green disc -->
<circle cx="312" cy="561" r="7.800" fill="#7ac043"/><circle cx="312" cy="561" r="5" fill="none" stroke="#fff" stroke-width="1.200"/><circle cx="312" cy="561" r="2" fill="#fff"/><path d="M315 555l4-2-1 4z" fill="#fff"/>
<!-- chrome -->
<circle cx="349" cy="561" r="8" fill="#e33b2e"/><path d="M349 561L342 557A8 8 0 0 0 345 568Z" fill="#2da94f"/><path d="M349 561l-4 7a8 8 0 0 0 12-7z" fill="#fbbc05"/><path d="M342.100 557a8 8 0 0 1 13.900 0H349z" fill="#e33b2e"/><circle cx="349" cy="561" r="3.600" fill="#fff"/><circle cx="349" cy="561" r="2.800" fill="#4285f4"/>
<!-- puzzle -->
<rect x="378" y="554" width="5" height="5" fill="#e04040"/><rect x="385" y="554" width="6" height="4" fill="#f4f4f4"/><rect x="380" y="561" width="5" height="6" fill="#f4f4f4"/><rect x="387" y="560" width="5" height="5" fill="#e04040"/><path d="M381 559v2M387 557v3" stroke="#ddd" stroke-width="1.500"/>
<!-- zalo -->
<rect x="414.500" y="553.500" width="16" height="15" rx="5" fill="#fff"/><path d="M418 568l-1.500 3 4-2.500z" fill="#fff"/>
<!-- skype -->
<circle cx="456" cy="558.500" r="5.500" fill="#28a8ea"/><circle cx="461.500" cy="563.500" r="5.500" fill="#28a8ea"/><circle cx="458.800" cy="561" r="7" fill="#28a8ea"/>
<!-- medibang -->
<rect x="487" y="552.500" width="17" height="17" rx="3" fill="#f4f4f4"/><circle cx="495.500" cy="561" r="6" fill="#22b0a0"/><path d="M495.500 555a6 6 0 0 1 6 6c-2.500 1-5-1-6-6z" fill="#f05a38"/><path d="M501.500 561a6 6 0 0 1-8 5.600c4-1 6-3 8-5.600z" fill="#58c050"/><path d="M492 557.500a3.500 3.500 0 0 1 4 0" stroke="#8ae0d8" stroke-width="1" fill="none"/>
<!-- opera -->
<ellipse cx="532" cy="561" rx="7.500" ry="8.200" fill="#e8202a"/><ellipse cx="532" cy="561" rx="3.300" ry="5.800" fill="#3a3864"/>
<!-- paint -->
<ellipse cx="567" cy="562.500" rx="8" ry="6" fill="#e8eef8"/><circle cx="563" cy="562" r="1.500" fill="#e04040"/><circle cx="566.500" cy="565" r="1.500" fill="#40a040"/><circle cx="570.500" cy="564" r="1.500" fill="#4060e0"/><path d="M565 560l9-7" stroke="#e8a040" stroke-width="2.200"/><path d="M572 554l3-2.500" stroke="#3a6ad0" stroke-width="2.400"/>
<!-- tray -->
<g fill="none" stroke="#fff" stroke-width="1">
<circle cx="834" cy="563" r="1.800"/><path d="M831 568c.5-3 5.500-3 6 0"/><circle cx="840" cy="558.500" r="1.600"/><path d="M838.500 562c1-1.500 3.500-1.500 4.300.5"/>
<path d="M858.500 564l4.500-4.500 4.500 4.500" stroke-width="1.200"/>
<rect x="876.500" y="559.500" width="9" height="5" fill="#fff"/><path d="M875 561v2"/><path d="M877 557.500c1.500 0 1 1.500 2.500 1.500"/>
<path d="M893 559.500h1.500l2.500-2.500v8l-2.500-2.500H893z" fill="#fff" stroke="none"/><path d="M898.500 559c1 1 1 3 0 4M900.500 557.500c1.800 2 1.800 5 0 7M902.500 556c2.600 3 2.600 7 0 10" stroke-width=".9"/>
<path d="M992.500 555.500h11v8.500h-5l-3 3v-3h-3z" stroke-width="1.100"/>
</g>
<text x="422.500" y="562.800" font-size="4.800" font-weight="bold" fill="#1a6ae0" text-anchor="middle" font-family="'Liberation Sans',sans-serif">Zalo</text>
<text x="458.800" y="565" font-size="11" font-weight="bold" fill="#fff" text-anchor="middle" font-family="'Liberation Sans',sans-serif">S</text>
<text x="914" y="564.500" font-size="8.300" fill="#fff" font-family="'Liberation Sans',sans-serif">ENG</text>
<text x="959.500" y="558.800" font-size="8.300" fill="#fff" text-anchor="middle" font-family="'Liberation Sans',sans-serif">10:16 AM</text>
<text x="960" y="572.800" font-size="8.300" fill="#fff" text-anchor="middle" font-family="'Liberation Sans',sans-serif">8/5/2021</text>
</svg></div>
</body></html>
